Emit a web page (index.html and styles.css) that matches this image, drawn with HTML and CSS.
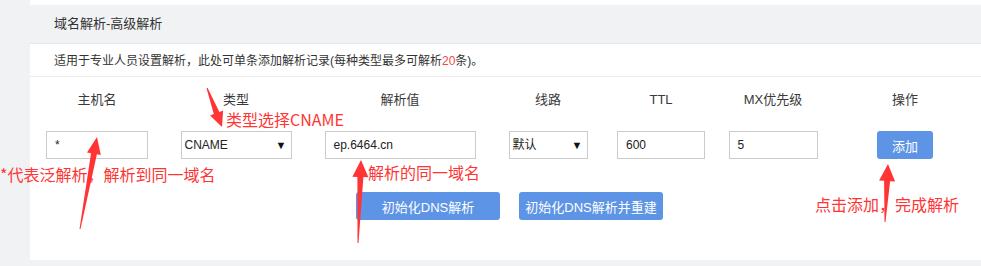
FILE: index.html
```html
<!DOCTYPE html>
<html lang="zh-CN">
<head>
<meta charset="utf-8">
<title>域名解析-高级解析</title>
<link rel="stylesheet" href="styles.css">
</head>
<body>
<div class="page">
  <div class="panel">
    <div class="hd">域名解析-高级解析</div>
    <div class="desc">适用于专业人员设置解析，此处可单条添加解析记录(每种类型最多可解析<span class="num">20</span>条)。</div>
    <div class="form">
      <div class="grid">
        <div class="th">主机名</div>
        <div class="th">类型</div>
        <div class="th">解析值</div>
        <div class="th">线路</div>
        <div class="th">TTL</div>
        <div class="th">MX优先级</div>
        <div class="th">操作</div>

        <div class="ipt w-host">*</div>
        <div class="sel w-type"><span>CNAME</span><span class="caret">▼</span></div>
        <div class="ipt w-val">ep.6464.cn</div>
        <div class="sel w-line"><span>默认</span><span class="caret">▼</span></div>
        <div class="ipt w-ttl">600</div>
        <div class="ipt w-mx">5</div>
        <button class="btn w-add">添加</button>
      </div>
      <div class="actions">
        <button class="btn w-big">初始化DNS解析</button>
        <button class="btn w-big">初始化DNS解析并重建</button>
      </div>
    </div>
  </div>

  <div class="note n-type">类型选择CNAME</div>
  <div class="note n-host">*代表泛解析，解析到同一域名</div>
  <div class="note n-val">解析的同一域名</div>
  <div class="note n-add">点击添加，完成解析</div>

  <svg class="arrows" width="981" height="266" viewBox="0 0 981 266">
    <polygon points="79.5,229 80.5,229 96.9,154.3 100.8,155 97,137 87,152.4 91,153.2"/>
    <polygon points="206.5,88.2 207.5,87.8 219.4,111.9 223.1,110.5 222,127 210.1,115.5 213.8,114.1"/>
    <polygon points="357.5,243 358.5,243 363.4,177.1 368.4,177.3 361,160 352.4,176.7 357.4,176.9"/>
    <polygon points="884.5,222 885.5,222 890.1,181.2 895.1,181.4 888,164 879.1,180.6 884.1,180.8"/>
  </svg>
</div>
</body>
</html>
```

FILE: styles.css
```css
* { box-sizing: border-box; }

html, body {
  margin: 0;
  padding: 0;
  background: #f1f2f4;
}

body {
  font-family: "Liberation Sans", "Noto Sans CJK SC", sans-serif;
  color: #333;
  font-size: 13px;
}

.page {
  position: relative;
  width: 981px;
  height: 266px;
  overflow: hidden;
}

.panel {
  margin-left: 30px;
  height: 260px;
  background: #fff;
  padding-top: 5px;
}

.hd {
  height: 39px;
  line-height: 38px;
  background: #f1f2f4;
  border-bottom: 1px solid #e4e5e7;
  padding-left: 24px;
  font-size: 13px;
  color: #333;
}

.desc {
  height: 33px;
  line-height: 34px;
  border-bottom: 1px solid #ebebeb;
  padding-left: 24px;
  font-size: 12px;
  color: #333;
}

.desc .num { color: #f2484b; }

.form {
  padding-top: 13px;
}

.grid {
  display: grid;
  grid-template-columns: 134px 144px 184px 112px 114px 110px 154px;
  grid-template-rows: 20px 28px;
  row-gap: 21px;
  justify-items: center;
}

.th {
  line-height: 20px;
  font-size: 13px;
  color: #3a3a3a;
}

.ipt, .sel {
  height: 28px;
  border: 1px solid #cbcbcb;
  background: #fff;
  font-size: 12px;
  color: #222;
  line-height: 26px;
  white-space: nowrap;
}

.ipt { padding-left: 8px; }

.sel {
  display: flex;
  justify-content: space-between;
  align-items: center;
  padding: 0 4px 0 3px;
}

.caret {
  font-size: 11px;
  color: #111;
}

.w-host { width: 102px; }
.w-type { width: 111px; }
.w-val { width: 151px; }
.w-line { width: 79px; }
.w-ttl { width: 88px; }
.w-mx { width: 89px; }

.btn {
  height: 28px;
  border: none;
  border-radius: 3px;
  background: #5e94e5;
  color: #fff;
  font-family: "Liberation Sans", "Noto Sans CJK SC", sans-serif;
  font-size: 13px;
  padding: 0;
  cursor: pointer;
}

.w-add { width: 56px; }
.w-big { width: 144px; }

.actions {
  display: flex;
  justify-content: center;
  gap: 19px;
  margin-top: 33px;
  padding-left: 8px;
}

.note {
  position: absolute;
  font-family: "Noto Sans CJK SC", sans-serif;
  font-size: 16px;
  line-height: 16px;
  color: #ff3434;
  white-space: nowrap;
}

.n-type { left: 226px; top: 111px; }
.n-host { left: 0; top: 166px; }
.n-val { left: 368px; top: 164px; }
.n-add { left: 815px; top: 196px; }

.arrows {
  position: absolute;
  left: 0;
  top: 0;
  pointer-events: none;
}

.arrows polygon { fill: #ff3535; }
```
